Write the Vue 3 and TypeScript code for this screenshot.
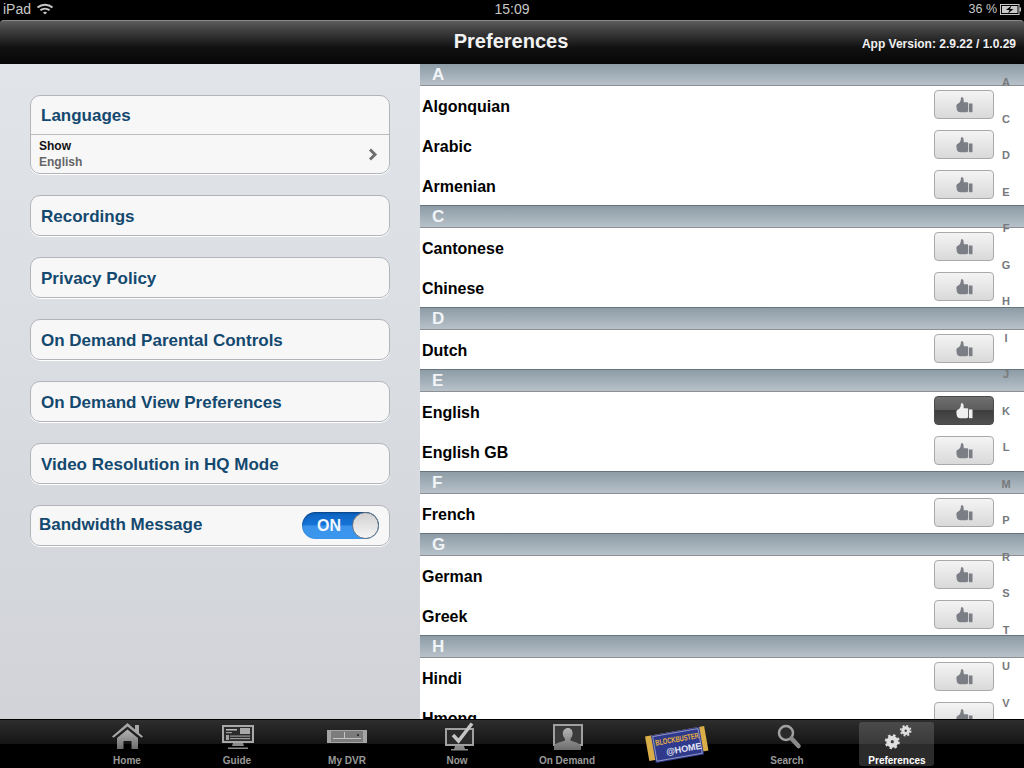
<script setup lang="ts">
interface Section {
  letter: string
  langs: string[]
}

const cards = [
  'Recordings',
  'Privacy Policy',
  'On Demand Parental Controls',
  'On Demand View Preferences',
  'Video Resolution in HQ Mode',
]

const sections: Section[] = [
  { letter: 'A', langs: ['Algonquian', 'Arabic', 'Armenian'] },
  { letter: 'C', langs: ['Cantonese', 'Chinese'] },
  { letter: 'D', langs: ['Dutch'] },
  { letter: 'E', langs: ['English', 'English GB'] },
  { letter: 'F', langs: ['French'] },
  { letter: 'G', langs: ['German', 'Greek'] },
  { letter: 'H', langs: ['Hindi', 'Hmong'] },
]

const index = 'A C D E F G H I J K L M P R S T U V'.split(' ')

const tabs = ['Home', 'Guide', 'My DVR', 'Now', 'On Demand', '', 'Search', 'Preferences']
</script>

<template>
  <div class="ipad">
    <div class="status">
      <div class="status-left">
        <span>iPad</span>
        <svg width="18" height="12" viewBox="0 0 18 12" fill="none" stroke="#c8c8c8" stroke-width="2">
          <path d="M1.5 4.6C5.8.8 12.2.8 16.5 4.6" />
          <path d="M4.4 7.3c2.7-2.2 6.5-2.2 9.2 0" />
          <path d="M9 11.6 6.9 9.4c1.2-.8 3-.8 4.2 0z" fill="#c8c8c8" stroke="none" />
        </svg>
      </div>
      <span class="clock">15:09</span>
      <div class="status-right">
        <span>36 %</span>
        <svg width="22" height="11" viewBox="0 0 22 11">
          <rect x=".5" y=".5" width="18.5" height="10" fill="none" stroke="#c8c8c8" />
          <rect x="2" y="2" width="15.5" height="7" fill="#c8c8c8" />
          <rect x="19.5" y="3.5" width="1.5" height="4" fill="#c8c8c8" />
          <path d="M11.5 1.6 6 6h3.5L8 9.4 13.5 5H10z" fill="#000" />
        </svg>
      </div>
    </div>

    <header class="topbar">
      <h1>Preferences</h1>
      <span class="version">App Version: 2.9.22 / 1.0.29</span>
    </header>

    <main class="content">
      <section class="left">
        <div class="card">
          <div class="card-title tall">Languages</div>
          <div class="card-sub">
            <div>
              <div class="sub-label">Show</div>
              <div class="sub-value">English</div>
            </div>
            <svg class="chevron" width="10" height="13" viewBox="0 0 10 13" fill="none" stroke="#707070" stroke-width="3">
              <path d="M2 1.5 7 6.5 2 11.5" />
            </svg>
          </div>
        </div>

        <div v-for="c in cards" :key="c" class="card">
          <div class="card-title">{{ c }}</div>
        </div>

        <div class="card toggle-card">
          <span class="toggle-label">Bandwidth Message</span>
          <div class="toggle">
            <span class="toggle-on">ON</span>
            <span class="knob" />
          </div>
        </div>
      </section>

      <section class="right">
        <template v-for="s in sections" :key="s.letter">
          <div class="sec-head">{{ s.letter }}</div>
          <div v-for="l in s.langs" :key="l" class="row">
            <span class="lang">{{ l }}</span>
            <div class="thumb-btn" :class="{ active: l === 'English' }">
              <svg width="17" height="16" viewBox="0 0 17 16">
                <path d="M5 .6c1.200-.6 2.400 0 2.500 1.300L7.800 5.300H11c.8 0 1.200.6 1.200 1.300v6.900c0 1-.8 1.700-1.700 1.700H4.200C2.600 15.200 1 14 .8 12.400L.4 9.400C.3 8 1 7 2.200 6.600 3.900 5.800 4.900 3.800 5 .6z" class="thumb-hand" />
                <rect x="13" y="6.500" width="3.500" height="8.700" class="thumb-cuff" />
              </svg>
            </div>
          </div>
        </template>

        <div class="index">
          <span v-for="i in index" :key="i">{{ i }}</span>
        </div>
      </section>
    </main>

    <nav class="tabbar">
      <div v-for="(t, n) in tabs" :key="n" class="tab" :class="{ current: t === 'Preferences' }">
        <svg class="tab-icon" width="60" height="32" viewBox="0 0 60 32">
          <defs>
            <linearGradient id="ig" x1="0" y1="0" x2="0" y2="1">
              <stop offset="0" stop-color="#b4b4b4" />
              <stop offset="1" stop-color="#6c6c6c" />
            </linearGradient>
          </defs>
          <g v-if="t === 'Home'">
            <path d="M15 14.500 30.500 1 38 7.500V3h4v8l4 3.500-1.500 1.200L30.500 4.500 16.500 15.700z" fill="#a6a6a6" />
            <path d="M20 16 30.500 7.500 41 16v11H34.500V19h-8v8H20z" fill="url(#ig)" />
          </g>
          <g v-else-if="t === 'Guide'">
            <rect x="15" y="3" width="32" height="18" fill="#a8a8a8" />
            <rect x="17" y="5" width="28" height="14" fill="#2b2b2b" />
            <rect x="33" y="6" width="10" height="6" fill="#a8a8a8" />
            <rect x="19" y="7" width="11" height="1.500" fill="#bcbcbc" />
            <rect x="19" y="10" width="6" height="1.200" fill="#999" />
            <rect x="19" y="13" width="3" height="5" fill="#a0a0a0" />
            <rect x="23" y="13.500" width="20" height="1.200" fill="#999" />
            <rect x="23" y="16" width="20" height="1.200" fill="#999" />
            <path d="M26 21h10l1 3H25zM21 25.500h20V27H21z" fill="#8a8a8a" />
          </g>
          <g v-else-if="t === 'My DVR'">
            <rect x="10" y="8" width="40" height="13" fill="#a4a4a4" />
            <rect x="14" y="9" width="32" height="11" fill="#7c7c7c" />
            <rect x="16" y="16" width="28" height="1" fill="#c4c4c4" />
            <rect x="27" y="10" width="1" height="6" fill="#c4c4c4" />
            <circle cx="41" cy="13" r="1.100" fill="#222" />
          </g>
          <g v-else-if="t === 'Now'">
            <rect x="19" y="7" width="27" height="16" fill="#2a2a2a" stroke="#a0a0a0" stroke-width="2" />
            <path d="M26 13l5.500 6L45 1.500" fill="none" stroke="#c4c4c4" stroke-width="3.500" />
            <path d="M28 24h9l1 3H27zM24 27h17v1.500H24z" fill="#8a8a8a" />
          </g>
          <g v-else-if="t === 'On Demand'">
            <rect x="17" y="3" width="28" height="20" fill="#3a3a3a" stroke="#a0a0a0" stroke-width="2" />
            <path d="M31 6c3 0 4.600 2.400 4.600 5.500 0 2.300-1 4-2.100 5.200v1.800c2.700 1.100 9.500 2.600 10.500 5.500V28H17v-4c1-2.900 8-4.400 11-5.500v-1.800c-1.200-1.200-2.200-2.900-2.200-5.200C25.800 8.400 28 6 31 6z" fill="url(#ig)" />
          </g>
          <g v-else-if="t === ''">
            <g transform="rotate(-10 30 23)">
              <rect x="0" y="9" width="60" height="25" fill="#d9ae48" />
              <rect x="6" y="9" width="49" height="28" fill="#2f3a8c" />
              <rect x="7.500" y="10.500" width="46" height="25" fill="none" stroke="#c9cbe0" stroke-width=".6" />
              <text x="31" y="20" class="bb-top" text-anchor="middle" textLength="44" lengthAdjust="spacingAndGlyphs">BLOCKBUSTER</text>
              <text x="36" y="31" class="bb-home" text-anchor="middle">@HOME</text>
            </g>
          </g>
          <g v-else-if="t === 'Search'">
            <circle cx="29" cy="11" r="7" fill="#2a2a2a" stroke="#a0a0a0" stroke-width="2.500" />
            <path d="M34.500 16.500 41.500 24" stroke="#8a8a8a" stroke-width="4.500" stroke-linecap="round" />
          </g>
          <g v-else>
            <circle cx="25.300" cy="19.700" r="3.800" fill="none" stroke="#e0e0e0" stroke-width="4.400" />
            <circle cx="25.300" cy="19.700" r="6.500" fill="none" stroke="#e0e0e0" stroke-width="2" stroke-dasharray="2.550 2.550" />
            <circle cx="38.700" cy="8.700" r="2.800" fill="none" stroke="#e0e0e0" stroke-width="3.200" />
            <circle cx="38.700" cy="8.700" r="5" fill="none" stroke="#e0e0e0" stroke-width="1.600" stroke-dasharray="1.960 1.970" />
          </g>
        </svg>
        <span v-if="t" class="tab-label">{{ t }}</span>
      </div>
    </nav>
  </div>
</template>

<style scoped>
.ipad {
  background: #000;
  display: flex;
  flex-direction: column;
  font-family: "Liberation Sans", Arial, sans-serif;
  height: 768px;
  overflow: hidden;
  width: 1024px;
}

.status {
  align-items: center;
  box-sizing: border-box;
  color: #c8c8c8;
  display: flex;
  flex: 0 0 20px;
  font-size: 14px;
  justify-content: space-between;
  padding: 0 2px 2px 3px;
  position: relative;
}

.status-left,
.status-right {
  align-items: center;
  display: flex;
  gap: 5px;
}

.status-right {
  font-size: 12.500px;
  gap: 3px;
}

.clock {
  left: 0;
  position: absolute;
  right: 0;
  text-align: center;
  top: 1px;
}

.topbar {
  align-items: center;
  background: linear-gradient(#5c5c5c 0, #3f3f3f 22%, #111 62%, #060606 100%);
  border-radius: 4px 4px 0 0;
  border-top: 1px solid #8a8a8a;
  box-sizing: border-box;
  display: flex;
  flex: 0 0 44px;
  justify-content: flex-end;
  padding-right: 8px;
  position: relative;
}

.topbar h1 {
  color: #f2f2f2;
  font-size: 20px;
  font-weight: bold;
  left: -2px;
  margin: 0 0 2px;
  position: absolute;
  right: 0;
  text-align: center;
}

.version {
  color: #f0f0f0;
  font-size: 12px;
  font-weight: bold;
  position: relative;
  top: 1px;
}

.content {
  display: flex;
  flex: 0 0 655px;
  overflow: hidden;
}

.left {
  background: linear-gradient(#e1e5ea, #d1d3d8);
  box-sizing: border-box;
  display: flex;
  flex: 0 0 420px;
  flex-direction: column;
  gap: 21px;
  padding: 31px 30px 0;
}

.card {
  background: #f7f7f7;
  border: 1px solid #b2b4ba;
  border-radius: 10px;
  box-shadow: 0 1px 0 #fff;
  box-sizing: border-box;
  color: #14496f;
  min-height: 41px;
}

.card-title {
  align-items: center;
  box-sizing: border-box;
  display: flex;
  font-size: 17px;
  font-weight: bold;
  height: 39px;
  padding: 3px 0 0 10px;
}

.card-title.tall {
  border-bottom: 1px solid #bcbcbf;
  padding-top: 1px;
}

.card-sub {
  align-items: center;
  box-sizing: border-box;
  display: flex;
  font-size: 12px;
  font-weight: bold;
  height: 38px;
  justify-content: space-between;
  line-height: 16px;
  padding: 0 11px 1px 8px;
}

.chevron {
  margin-top: 1px;
}

.sub-label {
  color: #111;
}

.sub-value {
  color: #666;
}

.toggle-card {
  align-items: center;
  display: flex;
  justify-content: space-between;
  padding: 0 10px 0 8px;
}

.toggle-label {
  font-size: 17px;
  font-weight: bold;
  margin-bottom: 2px;
}

.toggle {
  align-items: center;
  background: linear-gradient(#0b62bf 0, #1674d8 48%, #3b94ec 52%, #3a96ee 100%);
  border-radius: 14px;
  box-shadow: inset 0 1px 2px rgba(0, 0, 0, 0.35);
  display: flex;
  height: 27px;
  justify-content: flex-end;
  position: relative;
  width: 77px;
}

.toggle-on {
  color: #f2f7fd;
  font-size: 16px;
  font-weight: bold;
  left: 15px;
  position: absolute;
  top: 5px;
}

.knob {
  background: linear-gradient(#d0d0d0, #f6f6f6);
  border: 1px solid #6b7580;
  border-radius: 50%;
  box-sizing: border-box;
  height: 27px;
  width: 27px;
}

.right {
  background: #fff;
  flex: 1;
  position: relative;
}

.sec-head {
  background: linear-gradient(#8d9ca6, #b7c1c9);
  border-bottom: 1px solid #8d8f92;
  border-top: 1px solid #67757f;
  box-sizing: border-box;
  color: #f1f4f6;
  font-size: 17px;
  font-weight: bold;
  height: 23px;
  line-height: 22px;
  margin-top: -1px;
  padding-left: 12px;
}

.sec-head:first-child {
  border-top: 0;
  height: 22px;
  margin-top: 0;
}

.row {
  box-sizing: border-box;
  display: flex;
  height: 40px;
  justify-content: space-between;
  padding: 4px 30px 0 2px;
}

.lang {
  color: #000;
  font-size: 16px;
  font-weight: bold;
  line-height: 34px;
}

.thumb-btn {
  align-items: center;
  background: linear-gradient(#f4f4f4, #d9d9d9);
  border: 1px solid #a9a9a9;
  border-radius: 4px;
  box-sizing: border-box;
  display: flex;
  height: 29px;
  justify-content: center;
  width: 60px;
}

.thumb-hand,
.thumb-cuff {
  fill: #7b7f85;
}

.thumb-btn.active {
  background: linear-gradient(#707070 0, #5c5c5c 48%, #3e3e3e 50%, #505050 100%);
  border-color: #4a4a4a;
}

.thumb-btn.active .thumb-hand,
.thumb-btn.active .thumb-cuff {
  fill: #f0f0f0;
}

.index {
  color: #77797c;
  display: flex;
  flex-direction: column;
  font-size: 11px;
  font-weight: bold;
  position: absolute;
  right: 8px;
  text-align: center;
  top: 0;
  width: 20px;
}

.index span {
  height: 36.500px;
  line-height: 36.500px;
}

.tabbar {
  background: linear-gradient(#2e2e2e 0, #151515 49%, #000 49%);
  border-top: 1px solid #000;
  box-sizing: border-box;
  display: flex;
  flex: 0 0 49px;
  justify-content: center;
}

.tab {
  align-items: center;
  box-sizing: border-box;
  display: flex;
  flex: 0 0 110px;
  flex-direction: column;
  padding-top: 2px;
  position: relative;
}

.tab-icon {
  display: block;
  overflow: visible;
}

.tab-label {
  color: #999;
  font-size: 10px;
  font-weight: bold;
  margin-top: 1px;
}

.tab.current::before {
  background: linear-gradient(#4a4a4a 0, #3a3a3a 50%, #2b2b2b 50%, #2b2b2b 100%);
  border-radius: 3px;
  bottom: 2px;
  content: "";
  left: 17px;
  position: absolute;
  right: 18px;
  top: 2px;
}

.tab.current .tab-icon,
.tab.current .tab-label {
  position: relative;
}

.tab.current .tab-label {
  color: #fff;
}

.bb-top {
  fill: #e8b13c;
  font-family: "Liberation Sans", Arial, sans-serif;
  font-size: 8px;
  font-weight: bold;
}

.bb-home {
  fill: #e6e8f4;
  font-family: "Liberation Sans", Arial, sans-serif;
  font-size: 9px;
  font-weight: bold;
}
</style>

<style>
html,
body {
  background: #000;
  margin: 0;
}
</style>
